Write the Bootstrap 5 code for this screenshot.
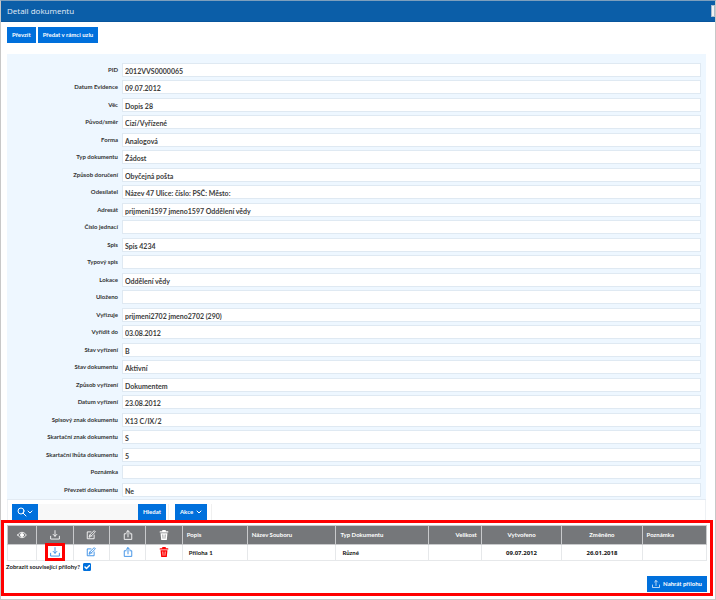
<!DOCTYPE html>
<html lang="cs">
<head>
<meta charset="utf-8">
<meta name="viewport" content="width=device-width, initial-scale=1">
<title>Detail dokumentu</title>
<link href="https://cdn.jsdelivr.net/npm/bootstrap@5.3.0/dist/css/bootstrap.min.css" rel="stylesheet">
<style>
body{font-family:Lato,"Open Sans",sans-serif;font-size:6px;line-height:8px;font-weight:700;color:#333;background:#fff}
.page{border:1px solid #c8c8c8;border-top-color:#7d9fbd;min-height:100vh}
.titlebar{background:#0b5ea8;color:#e4eef8;height:21px;padding:0 6px;border-bottom:1px solid #08559c}
.titlebar h1{font-family:"Open Sans",sans-serif;font-size:8px;line-height:12px;font-weight:400;margin:0}
.titlebar .grip{width:4px;height:12px;background:#f2f2f2;border:1px solid #a9bccd;margin-right:-6px}
.actions{padding:5px 6px 11px;gap:2px}
.btn-act{--bs-btn-color:#fff;--bs-btn-bg:#0070dc;--bs-btn-hover-color:#fff;--bs-btn-hover-bg:#005fc0;--bs-btn-border-width:0px;--bs-btn-border-radius:0px;font-size:6px;line-height:8px;font-weight:700;height:16px;padding:0 5px;gap:3px;white-space:nowrap}
.detail{background:#eef7ff;margin:0 9px 0 6px;padding:9px 5px 2px 6px;border-bottom:1px solid #e3ebf3}
.fieldrow{margin-bottom:3px;gap:4px}
.fieldrow:nth-child(even){margin-bottom:4px}
.fieldrow label{flex:0 0 105px;text-align:right;line-height:14px;color:#333;white-space:nowrap}
.fieldrow .form-control{height:14px;min-height:0;padding:2px 2px 0;font-size:7px;line-height:10px;font-weight:700;border:1px solid #dfe9f2;border-radius:0;color:#3c3c3c;background:#fff}
.tools{margin:0 9px 0 6px;padding:4px 4px 0;border:1px solid #eef1f4;border-width:0 1px}
.search-text{width:100px;height:16px;min-height:0;border:0;border-radius:0;background:#f8f8f8;font-size:7px;padding:0 4px}
.toolsep{border:1px solid #f0f0f0;border-width:0 1px;padding:0 4px 0 6px;margin-left:2px}
.attachments{border:3px solid #f00;margin:0 2px 2px 0;padding:2px 3px 1px}
.files{margin:0;font-size:6px;line-height:8px;table-layout:fixed;--bs-table-color:#222}
.files th,.files td{border:1px solid #e6e8ea;padding:0 4px;vertical-align:middle;white-space:nowrap}
.files th{height:19px;background:#75777a;color:#fff;border-color:#c9cacc;font-weight:700}
.files td{height:16px;color:#111;font-weight:700}
.files .date{font-family:"Open Sans",sans-serif;text-align:center}
.files .ico{padding:0;text-align:center}
.files .val{padding-left:6px}
.files a{display:inline-flex;color:#2f88e4}
.files a.del{color:#f00}
.files a.marked{outline:3px solid #f00;padding:1px 2px}
svg{display:block;fill:none;stroke:currentColor;stroke-width:1.4;stroke-linecap:round;stroke-linejoin:round}
.thin{stroke-width:1}
.ico svg{width:10px;height:10px;margin:auto}
.related{gap:3px;margin:2px 0 0 -1px;color:#222}
.related .form-check-input{width:8px;height:8px;margin:0;border-radius:1px}
.related .form-check-input:checked{background-color:#0070dc;border-color:#0070dc;background-size:10px}
.upload{padding-top:5px}
</style>
</head>
<body>
<svg class="d-none" aria-hidden="true">
<symbol id="i-eye" viewBox="0 0 16 16"><path d="M1 8q7-9 14 0q-7 9-14 0z"/><circle cx="8" cy="8" r="2.500" fill="currentColor"/></symbol>
<symbol id="i-down" viewBox="0 0 16 16"><path d="M8 1v9M5 7l3 3 3-3M1 10v4.500h14V10"/></symbol>
<symbol id="i-edit" viewBox="0 0 16 16"><path d="M8 3H2v11h11V8M5 11l1-3 7-7 2 2-7 7zM7 8l2 2"/></symbol>
<symbol id="i-share" viewBox="0 0 16 16"><path d="M5 6H2v9h12V6h-3M8 11V1M5 4l3-3 3 3"/></symbol>
<symbol id="i-trash" viewBox="0 0 16 16"><path fill="currentColor" stroke="none" fill-rule="evenodd" d="M2.500 5h11l-1 11h-9zM5.500 7l.5 7h1l-.3-7zM9.300 7L9 14h1l.5-7z"/><path stroke-width="2" d="M2 3h12M6 3V1h4v2"/></symbol>
<symbol id="i-up" viewBox="0 0 16 16"><path d="M8 11V1M5 4l3-3 3 3M1 10v5h14V10"/></symbol>
</svg>
<div class="page">
<header class="titlebar d-flex align-items-center justify-content-between"><h1>Detail dokumentu</h1><span class="grip"></span></header>
<div class="actions d-flex"><button class="btn btn-act" type="button">Převzít</button><button class="btn btn-act" type="button">Předat v rámci uzlu</button></div>
<form class="detail">
<div class="fieldrow d-flex"><label for="f1">PID</label><input class="form-control" id="f1" readonly value="2012VVS0000065"></div>
<div class="fieldrow d-flex"><label for="f2">Datum Evidence</label><input class="form-control" id="f2" readonly value="09.07.2012"></div>
<div class="fieldrow d-flex"><label for="f3">Věc</label><input class="form-control" id="f3" readonly value="Dopis 28"></div>
<div class="fieldrow d-flex"><label for="f4">Původ/směr</label><input class="form-control" id="f4" readonly value="Cizí/Vyřízené"></div>
<div class="fieldrow d-flex"><label for="f5">Forma</label><input class="form-control" id="f5" readonly value="Analogová"></div>
<div class="fieldrow d-flex"><label for="f6">Typ dokumentu</label><input class="form-control" id="f6" readonly value="Žádost"></div>
<div class="fieldrow d-flex"><label for="f7">Způsob doručení</label><input class="form-control" id="f7" readonly value="Obyčejná pošta"></div>
<div class="fieldrow d-flex"><label for="f8">Odesílatel</label><input class="form-control" id="f8" readonly value="Název 47 Ulice: číslo: PSČ: Město:"></div>
<div class="fieldrow d-flex"><label for="f9">Adresát</label><input class="form-control" id="f9" readonly value="prijmeni1597 jmeno1597 Oddělení vědy"></div>
<div class="fieldrow d-flex"><label for="f10">Číslo jednací</label><input class="form-control" id="f10" readonly value=""></div>
<div class="fieldrow d-flex"><label for="f11">Spis</label><input class="form-control" id="f11" readonly value="Spis 4234"></div>
<div class="fieldrow d-flex"><label for="f12">Typový spis</label><input class="form-control" id="f12" readonly value=""></div>
<div class="fieldrow d-flex"><label for="f13">Lokace</label><input class="form-control" id="f13" readonly value="Oddělení vědy"></div>
<div class="fieldrow d-flex"><label for="f14">Uloženo</label><input class="form-control" id="f14" readonly value=""></div>
<div class="fieldrow d-flex"><label for="f15">Vyřizuje</label><input class="form-control" id="f15" readonly value="prijmeni2702 jmeno2702 (290)"></div>
<div class="fieldrow d-flex"><label for="f16">Vyřídit do</label><input class="form-control" id="f16" readonly value="03.08.2012"></div>
<div class="fieldrow d-flex"><label for="f17">Stav vyřízení</label><input class="form-control" id="f17" readonly value="B"></div>
<div class="fieldrow d-flex"><label for="f18">Stav dokumentu</label><input class="form-control" id="f18" readonly value="Aktivní"></div>
<div class="fieldrow d-flex"><label for="f19">Způsob vyřízení</label><input class="form-control" id="f19" readonly value="Dokumentem"></div>
<div class="fieldrow d-flex"><label for="f20">Datum vyřízení</label><input class="form-control" id="f20" readonly value="23.08.2012"></div>
<div class="fieldrow d-flex"><label for="f21">Spisový znak dokumentu</label><input class="form-control" id="f21" readonly value="X13 C/IX/2"></div>
<div class="fieldrow d-flex"><label for="f22">Skartační znak dokumentu</label><input class="form-control" id="f22" readonly value="S"></div>
<div class="fieldrow d-flex"><label for="f23">Skartační lhůta dokumentu</label><input class="form-control" id="f23" readonly value="5"></div>
<div class="fieldrow d-flex"><label for="f24">Poznámka</label><input class="form-control" id="f24" readonly value=""></div>
<div class="fieldrow d-flex mb-0"><label for="f25">Převzetí dokumentu</label><input class="form-control" id="f25" readonly value="Ne"></div>
</form>
<div class="tools d-flex">
<button class="btn btn-act d-flex align-items-center" type="button" aria-label="Sloupce hledání"><svg class="thin" width="16" height="10" viewBox="0 0 16 10"><circle cx="4" cy="4" r="3"/><path d="M6 6l3 3M11 4l2 2 2-2"/></svg></button>
<input class="form-control search-text" type="search" aria-label="Hledaný text">
<button class="btn btn-act" type="button">Hledat</button>
<div class="toolsep"><button class="btn btn-act d-flex align-items-center" type="button">Akce <svg class="thin" width="6" height="5" viewBox="0 0 6 5"><path d="M1 1l2 2 2-2"/></svg></button></div>
</div>
<section class="attachments">
<table class="table files">
<colgroup><col style="width:4.200%"><col style="width:5.200%"><col style="width:5.200%"><col style="width:5.200%"><col style="width:5.200%"><col style="width:9.300%"><col style="width:12.700%"><col style="width:13.300%"><col style="width:7.500%"><col style="width:11.500%"><col style="width:11.500%"><col></colgroup>
<thead><tr>
<th class="ico"><svg><use href="#i-eye"/></svg></th><th class="ico"><svg><use href="#i-down"/></svg></th><th class="ico"><svg><use href="#i-edit"/></svg></th><th class="ico"><svg><use href="#i-share"/></svg></th><th class="ico"><svg><use href="#i-trash"/></svg></th>
<th>Popis</th><th>Název Souboru</th><th>Typ Dokumentu</th><th class="text-end">Velikost</th><th class="text-center">Vytvořeno</th><th class="text-center">Změněno</th><th>Poznámka</th></tr></thead>
<tbody><tr>
<td class="ico"></td><td class="ico"><a class="marked" href="#" aria-label="Stáhnout"><svg><use href="#i-down"/></svg></a></td><td class="ico"><a href="#" aria-label="Upravit"><svg><use href="#i-edit"/></svg></a></td><td class="ico"><a href="#" aria-label="Sdílet"><svg><use href="#i-share"/></svg></a></td><td class="ico"><a class="del" href="#" aria-label="Smazat"><svg><use href="#i-trash"/></svg></a></td>
<td class="val">Příloha 1</td><td></td><td class="val">Různé</td><td></td><td class="date">09.07.2012</td><td class="date">26.01.2018</td><td></td></tr></tbody>
</table>
<div class="related d-flex align-items-center"><label for="rel">Zobrazit související přílohy?</label><input class="form-check-input" type="checkbox" id="rel" checked></div>
<div class="upload d-flex justify-content-end"><button class="btn btn-act d-flex align-items-center" type="button"><svg width="8" height="8"><use href="#i-up"/></svg>Nahrát přílohu</button></div>
</section>
</div>
<script src="https://cdn.jsdelivr.net/npm/bootstrap@5.3.0/dist/js/bootstrap.bundle.min.js"></script>
</body>
</html>
